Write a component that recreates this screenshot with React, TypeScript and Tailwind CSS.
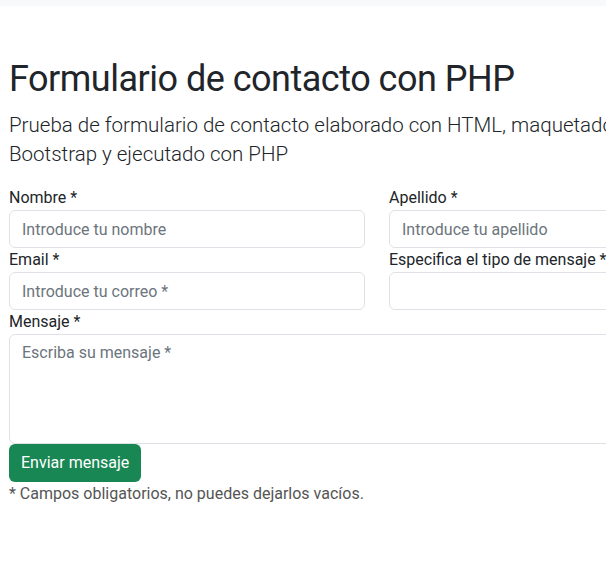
export default function App() {
  const font = { fontFamily: '"Roboto", "Liberation Sans", sans-serif' };
  return (
    <div className="min-h-[561px] w-[606px] overflow-hidden bg-white text-[#212529]" style={font}>
      <div className="h-[6px] bg-[#f8f9fa]" />
      <div className="w-[1000px] pl-[9px] pt-[49px]">
        <h1 className="text-[36px] font-normal leading-[48px] tracking-[-0.5px]">Formulario de contacto con PHP</h1>
        <p className="mt-[8px] text-[20.5px] font-light leading-[29px] w-[680px]">
          Prueba de formulario de contacto elaborado con HTML, maquetado con Bootstrap y ejecutado con PHP
        </p>
        <form className="mt-[17px] flex flex-col">
          <div className="flex gap-[24px]">
            <div className="w-[356px]">
              <label className="block text-[16px] leading-[24px]">Nombre *</label>
              <input className="block h-[38px] w-full rounded-[6px] border border-[#dee2e6] px-[12px] text-[16px] placeholder:text-[#6c757d]" placeholder="Introduce tu nombre" />
            </div>
            <div className="w-[356px]">
              <label className="block text-[16px] leading-[24px]">Apellido *</label>
              <input className="block h-[38px] w-full rounded-[6px] border border-[#dee2e6] px-[12px] text-[16px] placeholder:text-[#6c757d]" placeholder="Introduce tu apellido" />
            </div>
          </div>
          <div className="flex gap-[24px]">
            <div className="w-[356px]">
              <label className="block text-[16px] leading-[24px]">Email *</label>
              <input className="block h-[38px] w-full rounded-[6px] border border-[#dee2e6] px-[12px] text-[16px] placeholder:text-[#6c757d]" placeholder="Introduce tu correo *" />
            </div>
            <div className="w-[356px]">
              <label className="block text-[16px] leading-[24px]">Especifica el tipo de mensaje *</label>
              <input className="block h-[38px] w-full rounded-[6px] border border-[#dee2e6] px-[12px] text-[16px]" />
            </div>
          </div>
          <div className="w-[736px]">
            <label className="block text-[16px] leading-[24px]">Mensaje *</label>
            <textarea className="block h-[110px] w-full resize-none rounded-[6px] border border-[#dee2e6] px-[12px] py-[6px] text-[16px] leading-[24px] placeholder:text-[#6c757d]" placeholder="Escriba su mensaje *" />
          </div>
          <div>
            <button type="button" className="h-[38px] rounded-[6px] bg-[#198754] px-[12px] text-[16px] text-white">Enviar mensaje</button>
          </div>
          <p className="text-[16px] leading-[24px] text-[#555]">* Campos obligatorios, no puedes dejarlos vacíos.</p>
        </form>
      </div>
    </div>
  );
}
